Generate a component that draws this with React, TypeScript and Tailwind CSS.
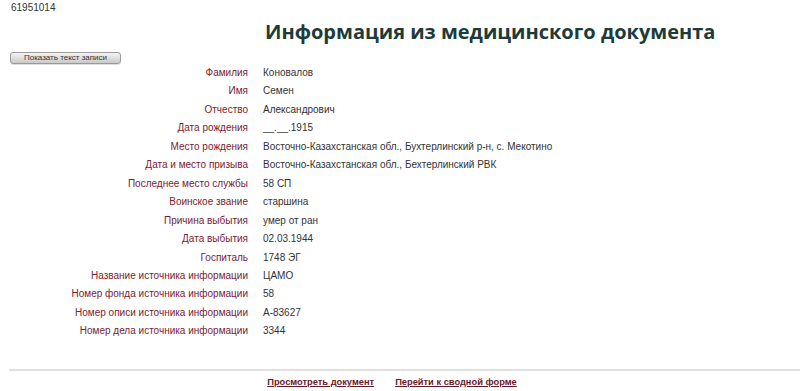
import React from "react";

const rows: [string, string][] = [
  ["Фамилия", "Коновалов"],
  ["Имя", "Семен"],
  ["Отчество", "Александрович"],
  ["Дата рождения", "__.__.1915"],
  ["Место рождения", "Восточно-Казахстанская обл., Бухтерлинский р-н, с. Мекотино"],
  ["Дата и место призыва", "Восточно-Казахстанская обл., Бехтерлинский РВК"],
  ["Последнее место службы", "58 СП"],
  ["Воинское звание", "старшина"],
  ["Причина выбытия", "умер от ран"],
  ["Дата выбытия", "02.03.1944"],
  ["Госпиталь", "1748 ЭГ"],
  ["Название источника информации", "ЦАМО"],
  ["Номер фонда источника информации", "58"],
  ["Номер описи источника информации", "А-83627"],
  ["Номер дела источника информации", "3344"],
];

const App = () => {
  return (
    <div className="w-[800px] h-[391px] bg-white font-['Liberation_Sans',Arial,sans-serif] overflow-hidden">
      <div className="pl-[11px] pt-[2px] text-[10px] leading-[12px] text-[#333]">61951014</div>

      <div className="grid grid-cols-[248px_1fr] gap-x-[15px] mt-[5px]">
        <div />
        <h1 className="font-['Open_Sans',sans-serif] font-bold text-[20px] leading-[26px] text-[#1d3b38] pl-[2px]">
          Информация из медицинского документа
        </h1>
      </div>

      <div className="pl-[10px] mt-[7px] flex">
        <button className="w-[111px] h-[12px] rounded-[3px] border border-[#9a9a9a] bg-gradient-to-b from-[#f4f4f4] to-[#c9c9c9] text-[8px] leading-[10px] text-[#333] shadow-[0_1px_0_#ddd]">
          Показать текст записи
        </button>
      </div>

      <div className="grid grid-cols-[248px_1fr] gap-x-[15px] text-[10px] leading-[18.45px]">
        {rows.map(([label, value], i) => (
          <React.Fragment key={i}>
            <div className="text-right text-[#7a2231]">{label}</div>
            <div className="text-[#333]">{value}</div>
          </React.Fragment>
        ))}
      </div>

      <hr className="mt-[28px] ml-[9px] border-0 border-t-2 border-[#e0e0e0]" />

      <div className="flex justify-center gap-[21px] mt-[4px] pr-[16px] text-[9.3px] leading-[14px] font-bold">
        <a href="#" className="text-[#6a1a28] underline">Просмотреть документ</a>
        <a href="#" className="text-[#6a1a28] underline">Перейти к сводной форме</a>
      </div>
    </div>
  );
};

export default App;
